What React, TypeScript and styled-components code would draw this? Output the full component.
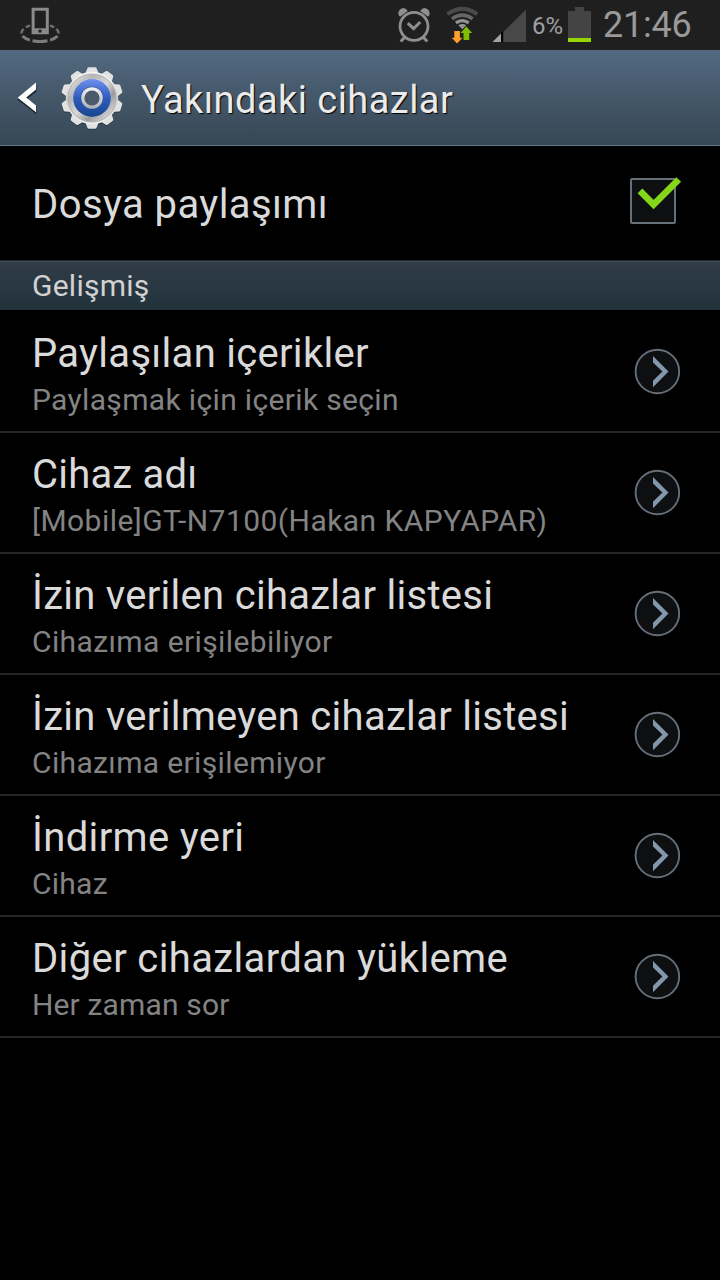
import React from 'react';
import styled, { createGlobalStyle } from 'styled-components';

const GlobalStyle = createGlobalStyle`
  html, body { margin: 0; background: #000; }
  body { font-family: Roboto, "Liberation Sans", sans-serif; font-weight: 400; }
  svg { display: block; flex: none; }
`;

const Screen = styled.div`
  width: 720px;
  height: 1280px;
  overflow: hidden;
  background: #000;
  display: flex;
  flex-direction: column;
`;

const StatusBar = styled.header`
  flex: none;
  height: 50px;
  box-sizing: border-box;
  padding: 0 28px 0 18px;
  background: #1f1f1f;
  display: flex;
  align-items: flex-start;
  justify-content: space-between;
`;

const StatusGroup = styled.div`
  display: flex;
  align-items: flex-start;
`;

const WifiSlot = styled.div`
  margin-left: 8px;
`;

const SignalSlot = styled.div`
  margin-left: 10px;
`;

const BatteryText = styled.span`
  margin-left: 6px;
  width: 36px;
  padding-top: 12px;
  font-size: 24px;
  line-height: 28px;
  color: #a0a0a0;
  white-space: nowrap;
`;

const Clock = styled.span`
  width: 89px;
  margin-left: 11px;
  padding-top: 3px;
  font-size: 36px;
  line-height: 44px;
  letter-spacing: -0.2px;
  color: #999;
  white-space: nowrap;
`;

const ActionBar = styled.div`
  flex: none;
  height: 96px;
  box-sizing: border-box;
  border-bottom: 1px solid #607886;
  background: linear-gradient(#52697f, #364654);
  display: flex;
  align-items: center;
  padding: 1px 0 0 16px;
`;

const GearSlot = styled.div`
  margin-left: 20px;
`;

const PageTitle = styled.h1`
  margin: 4px 0 0 17px;
  font-size: 38px;
  line-height: 48px;
  font-weight: 400;
  letter-spacing: 0.45px;
  color: #ebebeb;
  text-shadow: 1px 1px 1px #000;
  white-space: nowrap;
`;

const CheckRow = styled.div`
  flex: none;
  height: 114px;
  box-sizing: border-box;
  padding: 29px 37px 0 32px;
  display: flex;
  align-items: flex-start;
  justify-content: space-between;
`;

const CheckLabel = styled.div`
  display: flex;
  padding-top: 6px;
`;

const SectionHeader = styled.h2`
  flex: none;
  height: 50px;
  box-sizing: border-box;
  margin: 0 0 2px;
  padding: 7px 32px 0;
  border-top: 1px solid #1c262d;
  box-shadow: inset 0 1px 0 #3f505b;
  background: linear-gradient(#303c47, #22333c);
  font-size: 30px;
  line-height: 36px;
  font-weight: 400;
  letter-spacing: 0.25px;
  color: #d2d2d2;
`;

const List = styled.ul`
  list-style: none;
  margin: 0;
  padding: 0;
`;

const Row = styled.li`
  height: 121px;
  box-sizing: border-box;
  border-bottom: 2px solid #262626;
  padding: 18px 39px 0 32px;
  display: flex;
  justify-content: space-between;
`;

const RowText = styled.div`
  display: flex;
  flex-direction: column;
  gap: 4px;
`;

const Title = styled.span<{ $spacing: number }>`
  font-size: 40px;
  line-height: 48px;
  letter-spacing: ${(p) => p.$spacing}px;
  color: #dadada;
  white-space: nowrap;
`;

const Summary = styled.span<{ $spacing: number }>`
  font-size: 30px;
  line-height: 36px;
  letter-spacing: ${(p) => p.$spacing}px;
  color: #838383;
  white-space: nowrap;
`;

const ArrowSlot = styled.div`
  padding-top: 18px;
`;

const NearbyIcon = () => (
  <svg width="44" height="50" viewBox="18 0 44 50" fill="none">
    <g stroke="#7c7c7c" strokeWidth="3">
      <path d="M32.500 40.700Q40 42.400 47.500 40.700" />
      <path d="M22.500 36.100Q25 38.800 29.800 40.100" />
      <path d="M57.500 36.100Q55 38.800 50.200 40.100" />
    </g>
    <g stroke="#707070" strokeWidth="2.400">
      <path d="M21.400 33.600Q21.200 31 23.700 28.900" />
      <path d="M58.600 33.600Q58.800 31 56.300 28.900" />
      <path d="M25.800 27.300Q27.500 26.200 30 25.600" />
      <path d="M54.200 27.300Q52.500 26.200 50 25.600" />
    </g>
    <path fillRule="evenodd" fill="#8a8a8a" d="M31.600 7.800h17.200v26.500H31.600zM34.600 10.800v17.400h11.200V10.800zM38.500 29.800v2.600h3v-2.600z" />
  </svg>
);

const AlarmIcon = () => (
  <svg width="40" height="50" viewBox="394 0 40 50" fill="none" stroke="#8f8f8f">
    <circle cx="414" cy="26.300" r="14" strokeWidth="2.800" />
    <path d="M407.800 23.200l5.800 5.400 6.600-6.600" strokeWidth="3" />
    <path d="M398.300 13.800q.2-5 5-5.800 2.700.2 4.500 3l-7.800 5.700q-1.700-1.200-1.700-2.900zM429.700 13.800q-.2-5-5-5.800-2.700.2-4.500 3l7.800 5.700q1.700-1.200 1.700-2.900z" fill="#8f8f8f" stroke="none" />
    <path d="M404.500 37.500l-3.800 4.100M423.500 37.500l3.800 4.100" strokeWidth="3" />
  </svg>
);

const WifiIcon = () => (
  <svg width="40" height="50" viewBox="442 0 40 50" fill="none">
    <path d="M447.400 14.200Q462.300 3.600 477.200 14.200" stroke="#4a4a4a" strokeWidth="4" />
    <path d="M452 18.900Q462.300 11.300 472.600 18.900" stroke="#666" strokeWidth="3.600" />
    <path d="M455.900 22.900Q462.300 18.200 468.700 22.900" stroke="#939393" strokeWidth="3.200" />
    <path d="M458.300 25.300q4-2.700 8 0l-4 3.900z" fill="#939393" />
    <path d="M454.300 31h5.600v6.700h2.600l-5.400 5.800-5.400-5.800h2.600z" fill="#ff9d2e" />
    <path d="M466.300 26.600l5.900 6.400h-3v6.900h-5.700V33h-3z" fill="#7fbf00" />
  </svg>
);

const SignalIcon = () => (
  <svg width="34" height="50" viewBox="492 0 34 50">
    <path d="M526 9.500V42h-33z" fill="#484848" />
    <path d="M501 33.500V42h-8.500z" fill="#a3a3a3" />
    <rect x="501" y="32" width="2.200" height="10" fill="#000" />
  </svg>
);

const BatteryIcon = () => (
  <svg width="24" height="50" viewBox="568 0 24 50">
    <path d="M568 11h7V7h9v4h7v27h-23z" fill="#444" />
    <rect x="568" y="38" width="23" height="4" fill="#96d600" />
  </svg>
);

const BackIcon = () => (
  <svg width="24" height="40" viewBox="16 78 24 40">
    <path d="M37 83.800v7l-9.800 7.400 9.800 7.800v7.200L18.500 99v-1.400z" fill="#000" opacity=".55" transform="translate(-.6 1)" />
    <path d="M36 82.600v7l-9.800 8 9.800 7.800v6.900L17.700 97.700z" fill="#fff" />
  </svg>
);

const TEETH = [0, 36, 72, 108, 144, 180, 216, 252, 288, 324];

const GearIcon = () => (
  <svg width="64" height="66" viewBox="60 65 64 66">
    <defs>
      <linearGradient id="blue" x1="0" y1="0" x2="0" y2="1">
        <stop offset="0" stopColor="#6e90ee" />
        <stop offset=".5" stopColor="#2f5cbc" />
        <stop offset="1" stopColor="#17468f" />
      </linearGradient>
      <linearGradient id="metal" x1="0" y1="0" x2="1" y2="1">
        <stop offset="0" stopColor="#f0f0f0" />
        <stop offset=".25" stopColor="#b4b4b4" />
        <stop offset=".5" stopColor="#d8d8d8" />
        <stop offset=".7" stopColor="#9a9a9a" />
        <stop offset="1" stopColor="#f0f0f0" />
      </linearGradient>
      <linearGradient id="body" x1="0" y1="0" x2="0" y2="1">
        <stop offset="0" stopColor="#f6f6f6" />
        <stop offset=".5" stopColor="#cfcfcf" />
        <stop offset="1" stopColor="#eee" />
      </linearGradient>
      <linearGradient id="hub" x1="0" y1="0" x2="0" y2="1">
        <stop offset="0" stopColor="#f4f4f4" />
        <stop offset="1" stopColor="#a9adb8" />
      </linearGradient>
      <path
        id="cog"
        d="M86 71.800l1.400-3.500q.4-1.100 1.500-1.100h6.200q1.100 0 1.500 1.100l1.400 3.500 1.500 4.500H84.500z"
      />
    </defs>
    <g fill="#1b2730" opacity=".5" transform="translate(0 1)">
      <circle cx="92" cy="98" r="26.500" />
      {TEETH.map((a) => <use key={a} href="#cog" transform={`rotate(${a} 92 98)`} />)}
    </g>
    <g fill="#e2e2e2">
      {TEETH.map((a) => <use key={a} href="#cog" transform={`rotate(${a} 92 98)`} />)}
    </g>
    <circle cx="92" cy="98" r="26.300" fill="url(#body)" />
    <circle cx="92" cy="98" r="21.500" fill="none" stroke="url(#metal)" strokeWidth="4.600" />
    <circle cx="92" cy="98" r="24" fill="none" stroke="#a2a2a2" strokeWidth=".8" />
    <circle cx="92" cy="98" r="18.900" fill="url(#blue)" />
    <circle cx="92" cy="98" r="11.400" fill="#23477f" opacity=".6" />
    <circle cx="92" cy="98" r="10.800" fill="url(#hub)" />
    <circle cx="92" cy="98" r="7.600" fill="#4a5a6a" />
  </svg>
);

const Checkbox = () => (
  <svg width="54" height="50" viewBox="629 175 54 50">
    <rect x="631" y="179" width="44" height="44" rx="1" fill="#0d0f11" stroke="#667078" strokeWidth="2" />
    <path d="M640 190.900l13.600 13.600 25.100-25" fill="none" stroke="#85d51a" strokeWidth="6.700" />
  </svg>
);

const Arrow = () => (
  <svg width="48" height="48" viewBox="0 0 48 48">
    <circle cx="24.400" cy="23.500" r="21.800" fill="#0d0f11" stroke="#666e78" strokeWidth="1.900" />
    <path d="M20 7.900l15.500 15.600L20 39.300v-6.500l9.400-9.300L20 14.500z" fill="#8297ab" />
  </svg>
);

type Entry = { title: string; titleSpacing: number; summary: string; summarySpacing: number };

const entries: Entry[] = [
  { title: 'Paylaşılan içerikler', titleSpacing: 0.3, summary: 'Paylaşmak için içerik seçin', summarySpacing: 0.34 },
  { title: 'Cihaz adı', titleSpacing: 0.2, summary: '[Mobile]GT-N7100(Hakan KAPYAPAR)', summarySpacing: 0.45 },
  { title: 'İzin verilen cihazlar listesi', titleSpacing: 0.28, summary: 'Cihazıma erişilebiliyor', summarySpacing: 0.4 },
  { title: 'İzin verilmeyen cihazlar listesi', titleSpacing: 0.29, summary: 'Cihazıma erişilemiyor', summarySpacing: 0.36 },
  { title: 'İndirme yeri', titleSpacing: 0.35, summary: 'Cihaz', summarySpacing: 0.25 },
  { title: 'Diğer cihazlardan yükleme', titleSpacing: 0.37, summary: 'Her zaman sor', summarySpacing: 0.15 },
];

export default function App() {
  return (
    <Screen lang="tr">
      <GlobalStyle />
      <StatusBar>
        <NearbyIcon />
        <StatusGroup>
          <AlarmIcon />
          <WifiSlot><WifiIcon /></WifiSlot>
          <SignalSlot><SignalIcon /></SignalSlot>
          <BatteryText>6%</BatteryText>
          <BatteryIcon />
          <Clock>21:46</Clock>
        </StatusGroup>
      </StatusBar>
      <ActionBar>
        <BackIcon />
        <GearSlot><GearIcon /></GearSlot>
        <PageTitle>Yakındaki cihazlar</PageTitle>
      </ActionBar>
      <CheckRow>
        <CheckLabel><Title $spacing={0.42}>Dosya paylaşımı</Title></CheckLabel>
        <Checkbox />
      </CheckRow>
      <SectionHeader>Gelişmiş</SectionHeader>
      <List>
        {entries.map((e) => (
          <Row key={e.title}>
            <RowText>
              <Title $spacing={e.titleSpacing}>{e.title}</Title>
              <Summary $spacing={e.summarySpacing}>{e.summary}</Summary>
            </RowText>
            <ArrowSlot><Arrow /></ArrowSlot>
          </Row>
        ))}
      </List>
    </Screen>
  );
}
